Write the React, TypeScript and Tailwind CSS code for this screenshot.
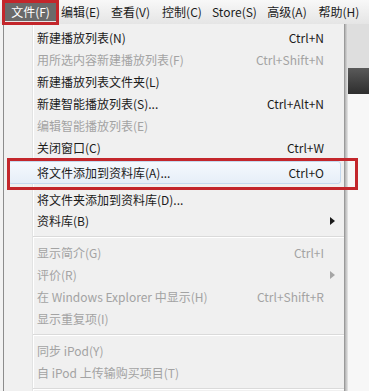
import React from 'react';

type Item =
  | { kind: 'sep'; h: string }
  | {
      kind: 'item';
      label: string;
      shortcut?: string;
      disabled?: boolean;
      submenu?: boolean;
      active?: boolean;
      h: string;
    };

const menuBar = [
  { label: '文件(F)', w: 'w-[51px]', active: true },
  { label: '编辑(E)', w: 'w-[49px]' },
  { label: '查看(V)', w: 'w-[51px]' },
  { label: '控制(C)', w: 'w-[52px]' },
  { label: 'Store(S)', w: 'w-[53px]' },
  { label: '高级(A)', w: 'w-[52px]' },
  { label: '帮助(H)', w: 'w-[52px]' },
];

const items: Item[] = [
  { kind: 'item', label: '新建播放列表(N)', shortcut: 'Ctrl+N', h: 'h-[22px]' },
  { kind: 'item', label: '用所选内容新建播放列表(F)', shortcut: 'Ctrl+Shift+N', disabled: true, h: 'h-[22px]' },
  { kind: 'item', label: '新建播放列表文件夹(L)', h: 'h-[22px]' },
  { kind: 'item', label: '新建智能播放列表(S)...', shortcut: 'Ctrl+Alt+N', h: 'h-[22px]' },
  { kind: 'item', label: '编辑智能播放列表(E)', disabled: true, h: 'h-[22px]' },
  { kind: 'item', label: '关闭窗口(C)', shortcut: 'Ctrl+W', h: 'h-[22px]' },
  { kind: 'item', label: '将文件添加到资料库(A)...', shortcut: 'Ctrl+O', active: true, h: 'h-[31px]' },
  { kind: 'item', label: '将文件夹添加到资料库(D)...', h: 'h-[20px]' },
  { kind: 'item', label: '资料库(B)', submenu: true, h: 'h-[21px]' },
  { kind: 'sep', h: 'h-[11px]' },
  { kind: 'item', label: '显示简介(G)', shortcut: 'Ctrl+I', disabled: true, h: 'h-[22px]' },
  { kind: 'item', label: '评价(R)', submenu: true, disabled: true, h: 'h-[22px]' },
  { kind: 'item', label: '在 Windows Explorer 中显示(H)', shortcut: 'Ctrl+Shift+R', disabled: true, h: 'h-[22px]' },
  { kind: 'item', label: '显示重复项(I)', disabled: true, h: 'h-[22px]' },
  { kind: 'sep', h: 'h-[10px]' },
  { kind: 'item', label: '同步 iPod(Y)', disabled: true, h: 'h-[22px]' },
  { kind: 'item', label: '自 iPod 上传输购买项目(T)', disabled: true, h: 'h-[22px]' },
  { kind: 'sep', h: 'h-[10px]' },
];

function Arrow({ disabled }: { disabled?: boolean }) {
  return (
    <svg width="5" height="8" viewBox="0 0 5 8">
      <path d="M0 0 L5 4 L0 8 Z" fill={disabled ? '#a6a6a6' : '#1a1a1a'} />
    </svg>
  );
}

function MenuRow({ item }: { item: Item }) {
  if (item.kind === 'sep') {
    return (
      <div className={`${item.h} flex items-center pl-[29px]`}>
        <div className="w-full border-t border-[#dadada] border-b border-b-white" />
      </div>
    );
  }
  const color = item.disabled ? 'text-[#a3a3a3]' : 'text-[#1b1b1b]';
  return (
    <div className={`${item.h} flex ${item.active ? 'items-start pt-[2px]' : 'items-center'}`}>
      <div
        className={`flex-1 flex items-center h-[23px] ${
          item.active
            ? 'ml-[4px] mr-[3px] rounded-[3px] border border-[#c5d9ee] bg-gradient-to-b from-[#f5f9fd] to-[#e6eef8]'
            : ''
        }`}
      >
        <div className={`${item.active ? 'pl-[28px]' : 'pl-[33px]'} flex-1 ${color}`}>{item.label}</div>
        <div className={`${color} ${item.active ? 'pr-[16px]' : ''}`}>{item.shortcut}</div>
        {!item.active && (
          <div className="w-[20px] flex items-center pl-[6px]">
            {item.submenu && <Arrow disabled={item.disabled} />}
          </div>
        )}
      </div>
    </div>
  );
}

export default function App() {
  return (
    <div
      className="relative w-[369px] h-[391px] overflow-hidden bg-[#f7f7f7] text-[12px] leading-none"
      style={{ fontFamily: '"Noto Sans CJK SC", "Noto Sans", sans-serif' }}
    >
      {/* menu bar */}
      <div className="h-[24px] flex items-center pl-[5px] bg-gradient-to-b from-[#f8f8f8] to-[#e5e5e5] text-[#1b1b1b]">
        {menuBar.map((m) => (
          <div
            key={m.label}
            className={`${m.w} h-[18px] flex items-center justify-center shrink-0 ${
              m.active ? 'bg-[#6a6a6a] text-white' : ''
            }`}
          >
            {m.label}
          </div>
        ))}
      </div>

      <div className="flex h-[367px]">
        <div className="w-[3px] bg-[#f2f2f2]" />
        {/* dropdown */}
        <div className="relative w-[342px] bg-[#f0f0f0] border-l border-[#8c8c8c] border-r border-r-[#9a9a9a] pt-[3px]">
          <div className="absolute left-[28px] top-0 bottom-0 w-[2px] border-l border-[#e2e3e3] border-r border-r-white" />
          <div className="relative flex flex-col">
            {items.map((it, i) => (
              <MenuRow key={i} item={it} />
            ))}
          </div>
        </div>
        <div className="w-[3px] bg-gradient-to-r from-[#b0b0b0] to-[#e8e8e8]" />
        {/* window behind */}
        <div className="flex-1 flex flex-col">
          <div className="h-[44px] bg-[#dedede]" />
          <div className="h-[26px] bg-gradient-to-b from-[#5a5a5a] to-[#2e2e2e]" />
          <div className="flex-1 bg-[#f7f7f7]" />
        </div>
      </div>

      {/* red annotation boxes */}
      <div className="absolute left-[2px] top-0 w-[57px] h-[25px] border-[3px] border-[#c3262b]" />
      <div className="absolute left-[7px] top-[158px] w-[351px] h-[32px] border-[3px] border-[#c3262b]" />
    </div>
  );
}
